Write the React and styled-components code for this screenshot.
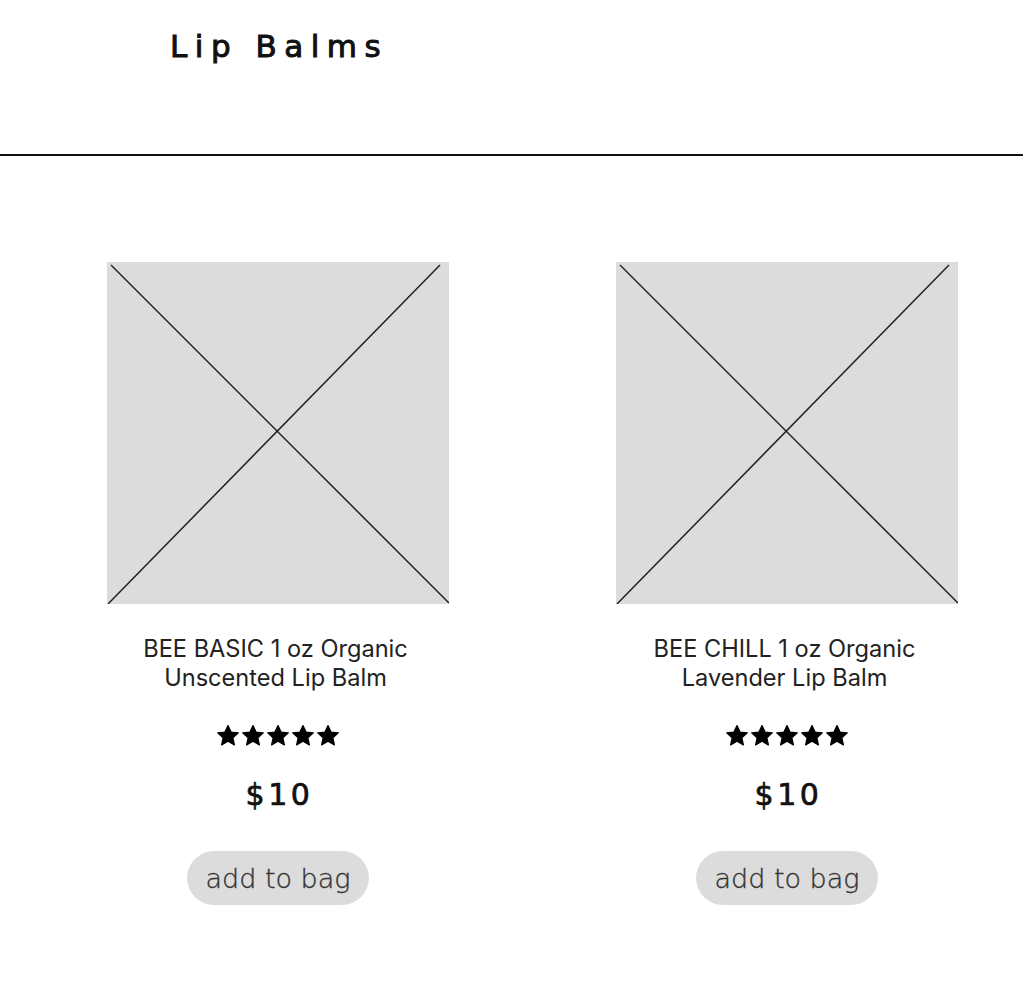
import React from "react";
import styled, { createGlobalStyle } from "styled-components";

const Global = createGlobalStyle`
  html, body { margin: 0; padding: 0; background: #fff; }
  body { font-family: "Inter", "Liberation Sans", sans-serif; }
`;

const Page = styled.div`
  width: 1023px;
  min-height: 1006px;
  background: #fff;
`;

const Header = styled.header`
  height: 156px;
  border-bottom: 2px solid #111;
  padding-left: 170px;
  box-sizing: border-box;
`;

const Title = styled.h1`
  margin: 0;
  padding-top: 27px;
  font-family: "DejaVu Sans", "Liberation Sans", sans-serif;
  font-weight: 400;
  font-size: 31px;
  line-height: 38px;
  letter-spacing: 7.5px;
  color: #111;
  -webkit-text-stroke: 1px #111;
`;

const Grid = styled.main`
  display: flex;
  gap: 167px;
  padding: 106px 0 0 107px;
`;

const Card = styled.article`
  width: 342px;
  display: flex;
  flex-direction: column;
  align-items: center;
`;

const Placeholder = styled.div`
  width: 342px;
  height: 342px;
  background: #dcdcdc;
  svg { display: block; }
`;

const Name = styled.h2`
  margin: 30px 0 0;
  font-family: "Inter", "Liberation Sans", sans-serif;
  font-weight: 400;
  font-size: 23.6px;
  line-height: 29px;
  color: #222;
  text-align: center;
  white-space: nowrap;
  padding-right: 5px;
`;

const Stars = styled.div`
  display: flex;
  gap: 1px;
  margin-top: 32px;
  height: 24px;
`;

const Price = styled.div`
  margin-top: 29px;
  font-family: "DejaVu Sans", "Liberation Sans", sans-serif;
  font-weight: 400;
  font-size: 30px;
  line-height: 36px;
  letter-spacing: 3.5px;
  color: #111;
  -webkit-text-stroke: 0.7px #111;
  padding-left: 3px;
`;

const Button = styled.button`
  margin-top: 38px;
  width: 182px;
  height: 54px;
  border: none;
  border-radius: 27px;
  background: #dcdcdc;
  font-family: "DejaVu Sans", "Liberation Sans", sans-serif;
  font-weight: 300;
  font-size: 27px;
  color: #333;
  -webkit-text-stroke: 0.35px #333;
  cursor: pointer;
  padding: 0;
`;

const Star = () => (
  <svg width="24" height="24" viewBox="0 0 24 24">
    <path
      d="M12 1.5l3.1 6.6 7.2.8-5.4 4.9 1.5 7.1L12 17.3l-6.4 3.6 1.5-7.1-5.4-4.9 7.2-.8z"
      fill="#000"
      stroke="#000"
      strokeWidth="1.2"
      strokeLinejoin="round"
    />
  </svg>
);

const products = [
  { id: 1, line1: "BEE BASIC 1 oz Organic", line2: "Unscented Lip Balm", price: "$10" },
  { id: 2, line1: "BEE CHILL 1 oz Organic", line2: "Lavender Lip Balm", price: "$10" },
];

export default function App() {
  return (
    <Page>
      <Global />
      <Header>
        <Title>Lip Balms</Title>
      </Header>
      <Grid>
        {products.map((p) => (
          <Card key={p.id}>
            <Placeholder>
              <svg width="342" height="342" viewBox="0 0 342 342">
                <line x1="4" y1="3" x2="342" y2="341" stroke="#222" strokeWidth="1.5" />
                <line x1="333" y1="3" x2="1" y2="342" stroke="#222" strokeWidth="1.5" />
              </svg>
            </Placeholder>
            <Name>
              {p.line1}
              <br />
              {p.line2}
            </Name>
            <Stars>
              {[0, 1, 2, 3, 4].map((i) => (
                <Star key={i} />
              ))}
            </Stars>
            <Price>{p.price}</Price>
            <Button>add to bag</Button>
          </Card>
        ))}
      </Grid>
    </Page>
  );
}
